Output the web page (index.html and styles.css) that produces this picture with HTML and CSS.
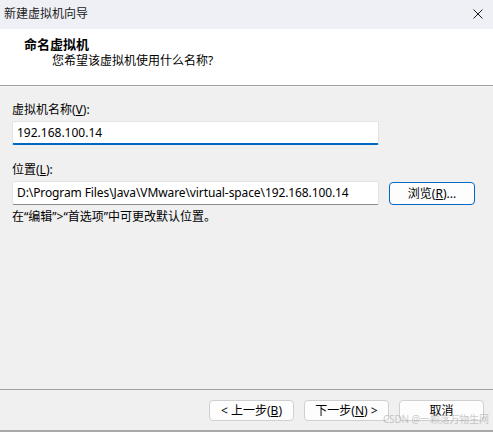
FILE: index.html
```html
<!DOCTYPE html>
<html lang="zh-CN">
<head>
<meta charset="utf-8">
<title>新建虚拟机向导</title>
<link rel="stylesheet" href="styles.css">
</head>
<body>
<div class="window">
  <div class="titlebar">
    <span class="title">新建虚拟机向导</span>
    <svg class="close" width="10" height="10" viewBox="0 0 10 10" aria-hidden="true">
      <path d="M0.5 0.5 L9.5 9.5 M9.5 0.5 L0.5 9.5" stroke="#1a1a1a" stroke-width="1" fill="none"/>
    </svg>
  </div>
  <div class="header">
    <div class="header-title">命名虚拟机</div>
    <div class="header-sub">您希望该虚拟机使用什么名称?</div>
  </div>
  <div class="content">
    <div class="label">虚拟机名称(<u>V</u>):</div>
    <div class="field field-focused">192.168.100.14</div>
    <div class="label label-2">位置(<u>L</u>):</div>
    <div class="row">
      <div class="field field-path">D:\Program Files\Java\VMware\virtual-space\192.168.100.14</div>
      <div class="btn btn-browse">浏览(<u>R</u>)...</div>
    </div>
    <div class="hint">在“编辑”&gt;“首选项”中可更改默认位置。</div>
  </div>
  <div class="footer">
    <div class="btn btn-nav">&lt; 上一步(<u>B</u>)</div>
    <div class="btn btn-nav">下一步(<u>N</u>) &gt;</div>
    <div class="btn btn-nav">取消</div>
    <div class="watermark">CSDN @一颗落万物生网</div>
  </div>
</div>
</body>
</html>
```
FILE: styles.css
```css
* { box-sizing: border-box; }
html, body {
  margin: 0;
  padding: 0;
}
body {
  width: 493px;
  height: 432px;
  overflow: hidden;
  background: #f0f0f0;
  font-family: "Noto Sans", "Noto Sans CJK SC", sans-serif;
  font-size: 12px;
  color: #000;
}
.window {
  display: flex;
  flex-direction: column;
  height: 432px;
  border-bottom: 2px solid #a9a9a9;
}
.titlebar {
  height: 29px;
  flex: none;
  background: #eff0f5;
  display: flex;
  align-items: center;
  justify-content: space-between;
  padding: 0 10px 2px 4px;
}
.title {
  line-height: 16px;
  color: #1b1b1b;
}
.close { display: block; }
.header {
  height: 57px;
  flex: none;
  background: #fff;
  border-bottom: 1px solid #a0a0a0;
  padding: 7px 0 0 24px;
}
.header-title {
  font-weight: bold;
  font-size: 13px;
  line-height: 16px;
}
.header-sub {
  margin: 1px 0 0 28px;
  line-height: 16px;
}
.content {
  flex: 1;
  padding: 15px 12px 0 12px;
  border-top: 1px solid #f8f8f8;
}
.label {
  line-height: 16px;
}
.label-2 { margin-top: 17px; }
.field {
  width: 367px;
  height: 24px;
  margin-top: 3px;
  background: #fff;
  border: 1px solid #e3e3e3;
  border-bottom: 1px solid #8a8a8a;
  border-radius: 2px;
  padding: 0 4px;
  line-height: 22px;
  white-space: nowrap;
  overflow: hidden;
}
.field-path { letter-spacing: -0.1px; }
.field-focused {
  border-bottom: 2px solid #0067c0;
  line-height: 21px;
}
.row {
  display: flex;
  align-items: flex-start;
  gap: 10px;
  margin-top: 3px;
}
.row .field { margin-top: 0; }
.btn {
  background: #fdfdfd;
  border: 1px solid #d0d0d0;
  border-radius: 4px;
  text-align: center;
  line-height: 19px;
  white-space: nowrap;
}
.btn-browse {
  width: 86px;
  height: 23px;
  margin-top: 1px;
  border-color: #0067c0;
  line-height: 21px;
}
.hint {
  margin-top: 4px;
  line-height: 16px;
}
.footer {
  flex: none;
  height: 41px;
  border-top: 1px solid #a0a0a0;
  display: flex;
  justify-content: flex-end;
  gap: 10px;
  padding: 10px 9px 0 0;
  position: relative;
}
.btn-nav {
  width: 85px;
  height: 21px;
}
.watermark {
  position: absolute;
  left: 383px;
  top: 23px;
  font-size: 10px;
  line-height: 12px;
  color: rgba(150, 150, 150, 0.5);
  white-space: nowrap;
  letter-spacing: -0.2px;
}
```
